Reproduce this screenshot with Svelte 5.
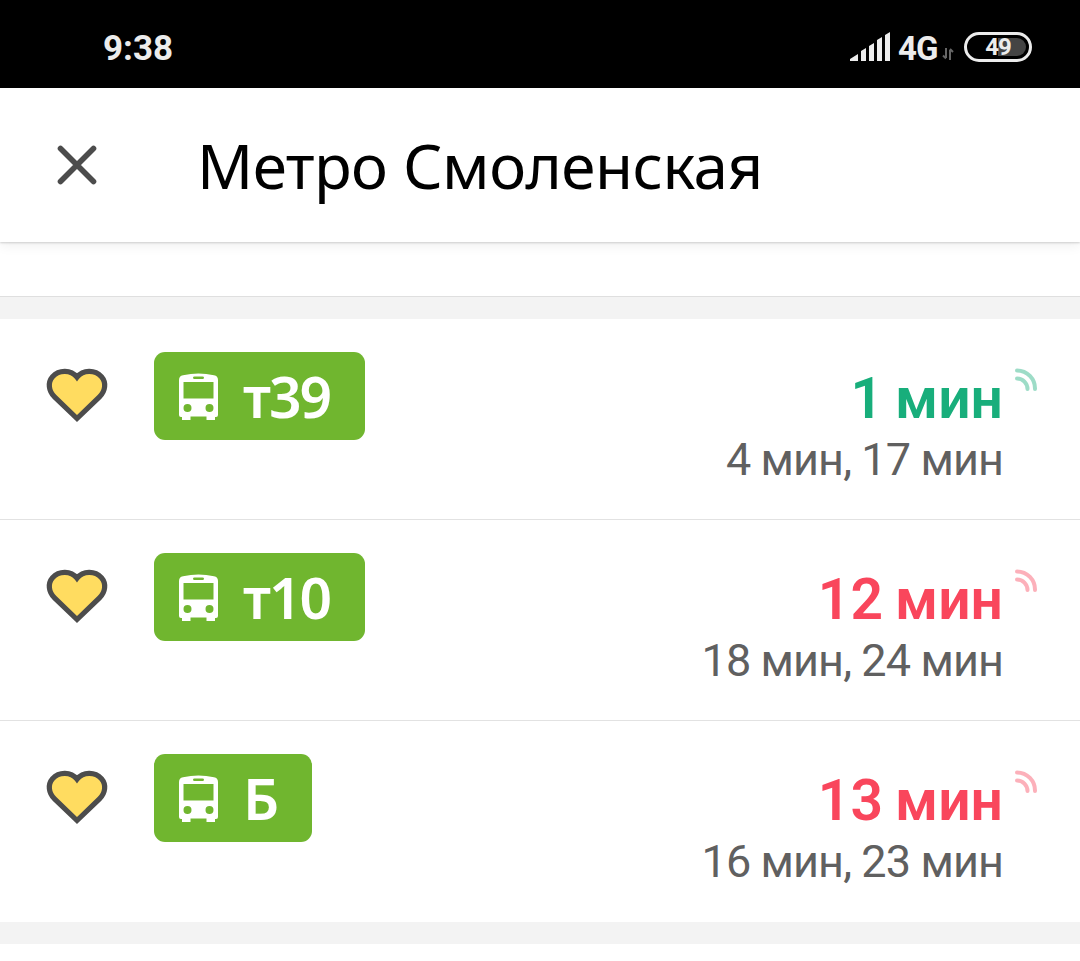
<script lang="ts">
  type Route = {
    name: string;
    next: string;
    later: string;
    soon: boolean;
  };

  export let stop: string = "Метро Смоленская";

  // Favourite routes that pass through this stop
  export let routes: Route[] = [
    { name: "т39", next: "1 мин", later: "4 мин, 17 мин", soon: true },
    { name: "т10", next: "12 мин", later: "18 мин, 24 мин", soon: false },
    { name: "Б", next: "13 мин", later: "16 мин, 23 мин", soon: false },
  ];
</script>

<div class="screen">
  <div class="status">
    <span class="clock">9:38</span>
    <div class="indicators">
      <svg class="signal" width="42" height="30" viewBox="0 0 42 30">
        <path d="M0 29v-2l8-5v7zM11 29V19l5-3v13zM19 29V14l5-3v18zM27 29V8l5-3v24zM35 29V3l5-3v29z" fill="#ececec" />
      </svg>
      <span class="network">4G</span>
      <svg class="traffic" width="12" height="14" viewBox="0 0 12 14">
        <path d="M4 1v10M1 8.500L4 11.500M8 13V3M8 2l3 3" fill="none" stroke="#666" stroke-width="2" />
      </svg>
      <div class="battery"><span class="level"></span><span class="percent">49</span></div>
    </div>
  </div>

  <header class="header">
    <button class="close" aria-label="Закрыть">
      <svg width="40" height="40" viewBox="0 0 40 40">
        <path d="M3.500 3.500l33 33M36.500 3.500l-33 33" fill="none" stroke="#4c4c4c" stroke-width="5.600" stroke-linecap="round" />
      </svg>
    </button>
    <h1 class="title">{stop}</h1>
  </header>

  <div class="spacer"></div>
  <div class="divider top"></div>

  <div class="routes">
    {#each routes as route}
      <div class="route">
        <svg class="heart" width="62" height="56" viewBox="0 0 62 56">
          <path
            d="M31 50.500L8.500 28.800C2.500 22.800 1.500 14.500 6.500 8.700C13 1.500 25 1.500 31 9.200C37 1.500 49 1.500 55.500 8.700C60.500 14.500 59.500 22.800 53.500 28.800Z"
            fill="#ffdc60"
            stroke="#4c4c4c"
            stroke-width="5.200"
          />
        </svg>
        <div class="badge">
          <svg class="bus" width="39" height="48" viewBox="0 0 39 48">
            <path
              fill="#fff"
              fill-rule="evenodd"
              d="M4 2.200Q19.500-1.200 35 2.200Q39 3 39 7V42Q39 44 37 44H36V47H27.500V43.500H11.500V47H3V44H2Q0 44 0 42V7Q0 3 4 2.200ZM15.500 3.500Q14 3.500 14 4.800Q14 6 15.500 6H23.500Q25 6 25 4.800Q25 3.500 23.500 3.500ZM4.500 9V25.500H34.500V9ZM8.500 31a4 4 0 1 0 0 8a4 4 0 1 0 0-8ZM30.500 31a4 4 0 1 0 0 8a4 4 0 1 0 0-8Z"
            />
          </svg>
          <span class="name">{route.name}</span>
        </div>
        <div class="times">
          <div class="next" class:soon={route.soon}>
            {route.next}
            <svg class="live" width="24" height="24" viewBox="0 0 24 24">
              <path d="M2 2.500A18 18 0 0 1 20 21M2 10.500A10.500 10.500 0 0 1 12.500 21" />
            </svg>
          </div>
          <div class="later">{route.later}</div>
        </div>
      </div>
    {/each}
  </div>

  <div class="divider"></div>
</div>

<style>
  :global(body) {
    margin: 0;
    background: #fff;
  }

  .screen {
    width: 1080px;
    height: 961px;
    overflow: hidden;
    background: #fff;
    font-family: "Noto Sans", "Open Sans", sans-serif;
  }

  .status {
    display: flex;
    justify-content: space-between;
    box-sizing: border-box;
    height: 88px;
    padding: 0 48px 0 103px;
    background: #000;
    color: #ececec;
    font-family: Roboto, sans-serif;
    font-weight: 700;
  }

  .clock {
    padding-top: 28px;
    font-size: 35px;
    line-height: 41px;
  }

  .indicators {
    display: flex;
    align-items: flex-start;
  }

  .signal {
    margin-top: 32px;
  }

  .network {
    margin: 28px 0 0 6px;
    width: 40px;
    font-size: 33px;
    line-height: 41px;
    letter-spacing: -1px;
  }

  .traffic {
    margin: 47px 0 0 4px;
  }

  .battery {
    position: relative;
    box-sizing: border-box;
    width: 68px;
    height: 30px;
    margin: 32px 0 0 10px;
    border: 3px solid #ececec;
    border-radius: 15px;
    text-align: center;
  }

  .level {
    position: absolute;
    top: 3px;
    right: 3px;
    width: 28px;
    height: 18px;
    border-radius: 0 9px 9px 0;
    background: #444;
  }

  .percent {
    position: relative;
    font-size: 24px;
    line-height: 25px;
    display: block;
    letter-spacing: -1px;
  }

  .header {
    position: relative;
    display: flex;
    align-items: center;
    height: 154px;
    background: #fff;
    box-shadow: 0 1px 2px rgba(0, 0, 0, 0.16), 0 3px 12px rgba(0, 0, 0, 0.07);
  }

  .close {
    display: flex;
    margin-left: 57px;
    padding: 0;
    border: none;
    background: none;
  }

  .title {
    margin: 0 0 0 100px;
    color: #000;
    font-size: 62px;
    font-weight: 400;
    line-height: 80px;
    letter-spacing: -0.550px;
    white-space: nowrap;
  }

  .spacer {
    height: 54px;
  }

  .divider {
    box-sizing: border-box;
    height: 22px;
    background: #f3f3f3;
  }

  .divider.top {
    height: 23px;
    border-top: 1px solid #dfdfdf;
  }

  .route {
    display: flex;
    align-items: flex-start;
    box-sizing: border-box;
    height: 201px;
    padding: 33px 77px 0 46px;
    border-bottom: 1px solid #e2e2e2;
  }

  .route:last-child {
    border-bottom: none;
  }

  .heart {
    margin-top: 16px;
  }

  .badge {
    display: flex;
    align-items: center;
    box-sizing: border-box;
    height: 88px;
    margin-left: 46px;
    padding: 0 35px 0 25px;
    border-radius: 11px;
    background: #70b62f;
    color: #fff;
  }

  .bus {
    margin-top: 1px;
  }

  .name {
    margin-left: 25px;
    font-size: 57px;
    font-weight: 600;
    line-height: 88px;
    letter-spacing: -2px;
  }

  .times {
    margin-left: auto;
    font-family: Roboto, sans-serif;
    text-align: right;
    white-space: nowrap;
  }

  .next {
    position: relative;
    padding-top: 13px;
    color: #f9465c;
    font-size: 57px;
    font-weight: 600;
    line-height: 68px;
    word-spacing: -2px;
  }

  .next.soon {
    color: #18ae7b;
  }

  .live {
    position: absolute;
    top: 16px;
    right: -36px;
    fill: none;
    stroke: currentColor;
    stroke-width: 4;
    stroke-linecap: round;
    opacity: 0.42;
  }

  .later {
    color: #606060;
    font-size: 45px;
    line-height: 54px;
    letter-spacing: -0.900px;
  }
</style>
